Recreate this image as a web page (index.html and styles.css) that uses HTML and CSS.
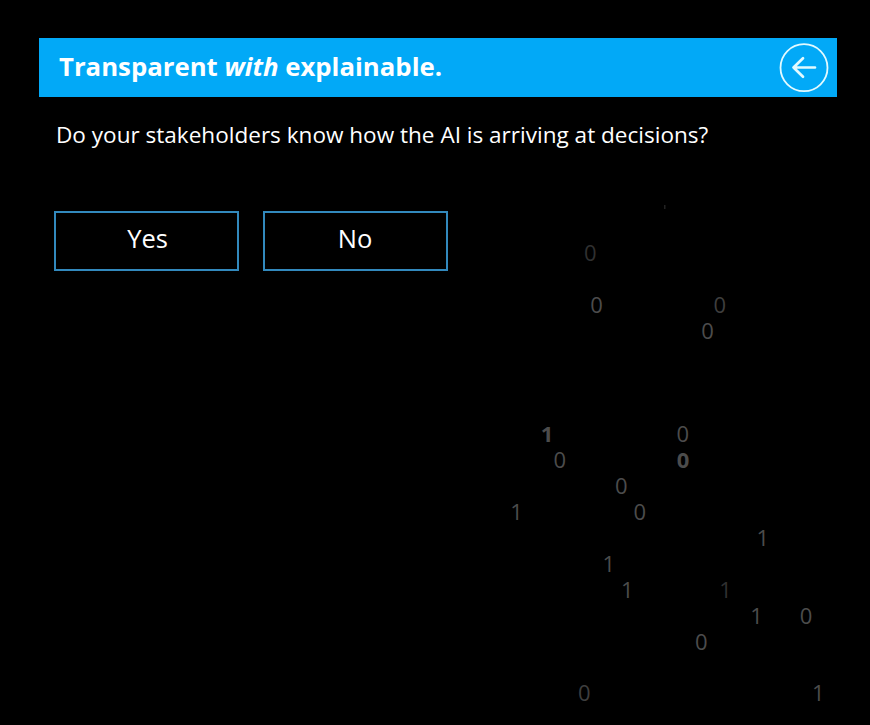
FILE: index.html
```html
<!DOCTYPE html>
<html lang="en">
<head>
<meta charset="utf-8">
<title>Transparent with explainable.</title>
<link rel="stylesheet" href="styles.css">
</head>
<body>
<main class="page">
  <header class="bar">
    <h1 class="title">Transparent <em>with</em> explainable.</h1>
    <button class="back" aria-label="Back">
      <svg viewBox="0 0 50 50" width="50" height="50"><circle cx="25" cy="24.7" r="23.5"/><path d="M36 24.5H14.5M24 15.3L14.5 24.5L24 33.7"/></svg>
    </button>
  </header>
  <p class="question">Do your stakeholders know how the AI is arriving at decisions?</p>
  <div class="answers">
    <button class="answer">Yes</button>
    <button class="answer">No</button>
  </div>
</main>
<svg class="digits" viewBox="0 0 870 725" width="870" height="725" aria-hidden="true">
  <rect x="664" y="205" width="1.5" height="4" class="speck"/>
  <text class="dim" x="590.4" y="261.3">0</text>
  <text x="596.6" y="313">0</text>
  <text class="mid" x="719.8" y="313">0</text>
  <text x="707.5" y="339">0</text>
  <text class="bold" x="547" y="442.4">1</text>
  <text x="682.8" y="442.4">0</text>
  <text x="559.8" y="468.4">0</text>
  <text class="bold" x="683" y="468.4">0</text>
  <text x="621.2" y="494.2">0</text>
  <text x="516.5" y="520.1">1</text>
  <text x="639.8" y="520.1">0</text>
  <text x="762.7" y="546">1</text>
  <text x="608.8" y="572">1</text>
  <text x="627.2" y="598">1</text>
  <text class="dim" x="725.6" y="598">1</text>
  <text x="756.5" y="624">1</text>
  <text x="806.1" y="624">0</text>
  <text x="701.3" y="650">0</text>
  <text class="mid" x="584.3" y="701.4">0</text>
  <text x="818.2" y="701.4">1</text>
</svg>
</body>
</html>
```
FILE: styles.css
```css
* { box-sizing: border-box; }
body {
  margin: 0;
  background: #000;
  color: #fff;
  font-family: "Open Sans", sans-serif;
  overflow: hidden;
}
.page { height: 725px; padding: 38px 33px 0 39px; }
.bar {
  display: flex;
  align-items: center;
  justify-content: space-between;
  height: 59px;
  padding: 0 8px 0 20px;
  background: #02a9f7;
}
.title { margin: 0; padding-bottom: 3px; font-size: 25.75px; line-height: 36px; font-weight: 700; white-space: nowrap; }
.back { display: flex; padding: 0; border: 0; background: none; }
.back svg { fill: none; stroke: #e2faff; stroke-width: 1.8; stroke-linecap: round; stroke-linejoin: round; }
.back path { stroke-width: 2.7; }
.question { margin: 21px 0 0 17px; font-size: 22.56px; line-height: 34px; white-space: nowrap; }
.answers { display: flex; gap: 24px; margin: 59px 0 0 15px; }
.answer {
  width: 185px;
  height: 60px;
  padding: 0 0 6px;
  border: 2px solid #3289bd;
  background: #000;
  color: #fff;
  font: 400 25.5px/36px "Open Sans", sans-serif;
}
.answer:first-child { padding-left: 2px; }
.answer:last-child { padding-right: 1px; }
.digits {
  position: absolute;
  top: 0;
  left: 0;
  pointer-events: none;
  font-size: 22px;
  text-anchor: middle;
  fill: #4c4c4c;
}
.dim { fill: #303030; }
.mid { fill: #3e3e3e; }
.bold { font-weight: 700; }
.speck { fill: #222; }
```
